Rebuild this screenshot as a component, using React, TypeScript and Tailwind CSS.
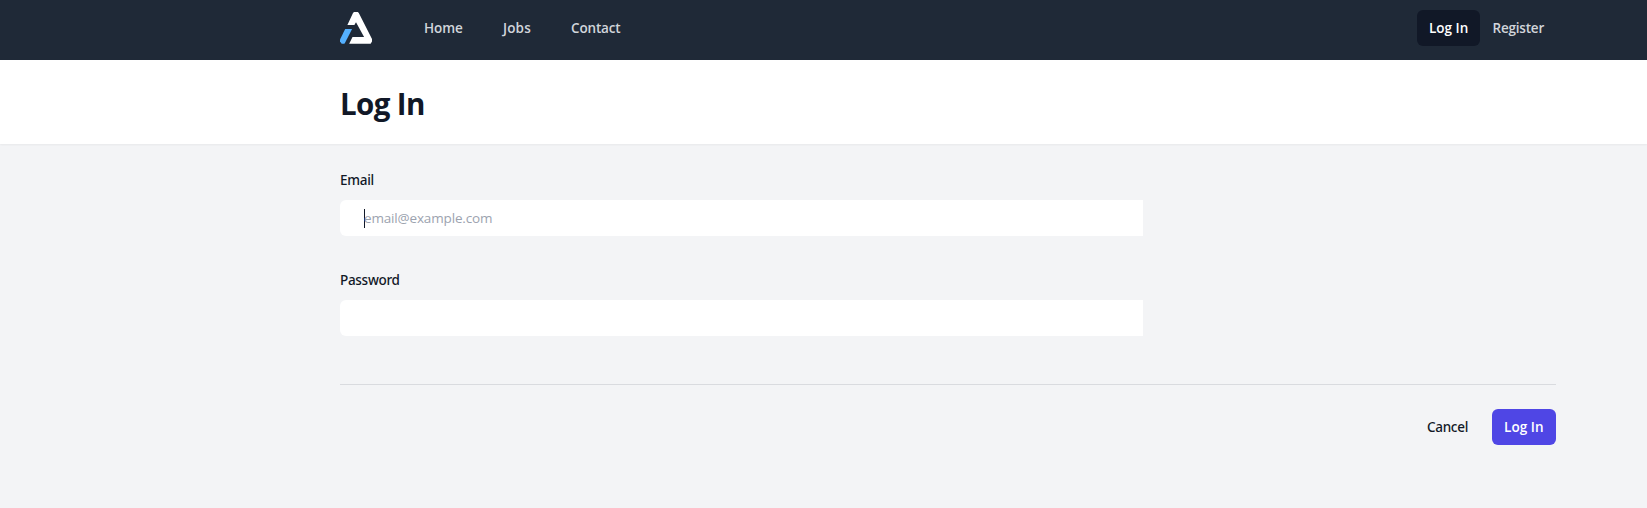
const navItems = [
  { label: "Home", className: "w-[78px] tracking-[-0.1px]" },
  { label: "Jobs", className: "w-[69px] pl-px tracking-[0.15px]" },
  { label: "Contact", className: "w-[60px] tracking-[-0.15px]" },
];

function Logo() {
  return (
    <svg className="h-8 w-8 shrink-0" viewBox="0 0 32 32" aria-hidden="true">
      <path fill="#fff" d="M14 0h3.8l1 1L32 27v2.4L30.6 31.7H9.2l3.3-6.7H24.1L16 10.2 14.4 13H7.4L13 1z" />
      <path fill="#54b0ff" d="M5.2 17h6.9L4.8 31.2 4.2 31.8H1.7L0 29.4V27.4z" />
    </svg>
  );
}

export default function App() {
  return (
    <div className="min-h-[508px] bg-gray-100 font-['Open_Sans','Noto_Sans',sans-serif] text-[13.5px] leading-[21px] text-[#111827]">
      <nav className="flex h-[60px] items-start bg-[#1f2937] pr-[91px] pl-[340px] font-semibold text-[#d1d5db]">
        <div className="pt-3">
          <Logo />
        </div>
        <div className="ml-[52px] flex pt-[18px]">
          {navItems.map((item) => (
            <a key={item.label} href="#" className={item.className}>
              {item.label}
            </a>
          ))}
        </div>
        <div className="ml-auto flex pt-[10px]">
          <a href="#" className="h-9 w-[63px] rounded-md bg-[#111827] py-2 pl-3 whitespace-nowrap text-white">
            Log In
          </a>
          <a href="#" className="h-9 w-[76px] py-2 pl-[12.5px] tracking-[-0.2px]">
            Register
          </a>
        </div>
      </nav>

      <header className="h-[84px] bg-white pt-[26px] pl-[340px] shadow-[0_1px_2px_0_rgb(0_0_0/0.05)]">
        <h1 className="text-[29.5px] leading-9 font-bold tracking-[-0.6px]">Log In</h1>
      </header>

      <form className="pr-[91px] pl-[340px]" onSubmit={(e) => e.preventDefault()}>
        <div className="pt-[26px]">
          <label htmlFor="email" className="block h-[30px] font-['Noto_Sans',sans-serif] leading-5 font-medium tracking-[-0.3px]">Email</label>
          <div className="flex h-9 w-[803px] items-center rounded-l-md bg-white pl-6">
            <span className="-mr-px h-[19px] w-px bg-[#111827]" />
            <input id="email" type="email" placeholder="email@example.com" className="min-w-0 flex-1 bg-transparent tracking-[-0.16px] outline-none placeholder:text-[#9ca3af]" />
          </div>
        </div>
        <div className="pt-[34px]">
          <label htmlFor="password" className="block h-[30px] font-['Noto_Sans',sans-serif] leading-5 font-medium tracking-[-0.3px]">Password</label>
          <div className="flex h-9 w-[803px] rounded-l-md bg-white px-6">
            <input id="password" type="password" className="min-w-0 flex-1 bg-transparent outline-none" />
          </div>
        </div>
        <div className="mt-12 flex justify-end border-t border-[#d9dbdf] pt-6">
          <button type="button" className="mr-6 h-9 w-[42px] pl-px text-left font-['Noto_Sans',sans-serif] font-medium tracking-[-0.3px]">Cancel</button>
          <button type="submit" className="h-9 w-16 rounded-md bg-[#4f46e5] pl-3 text-left font-semibold whitespace-nowrap tracking-[0.05px] text-white">Log In</button>
        </div>
      </form>
    </div>
  );
}
